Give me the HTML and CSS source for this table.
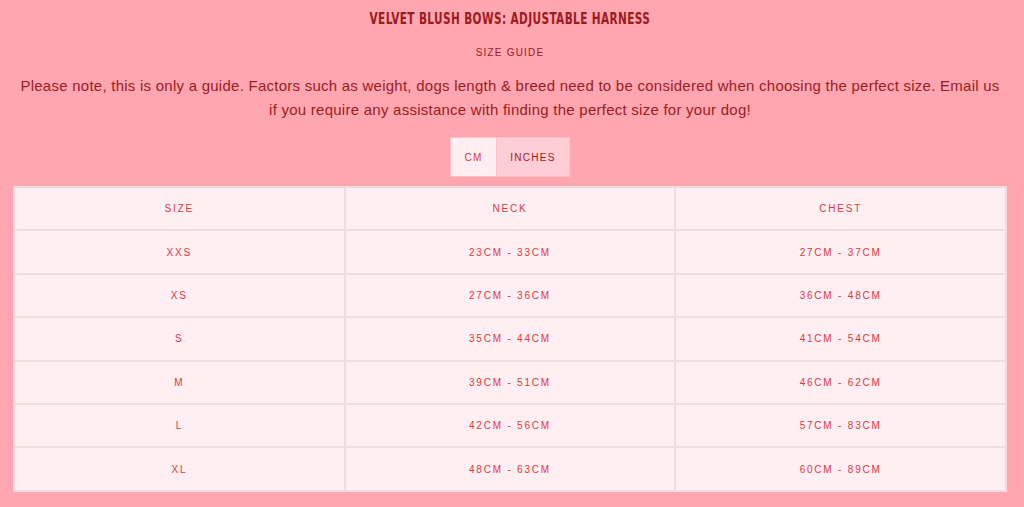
FILE: index.html
```html
<!DOCTYPE html>
<html>
<head>
<meta charset="utf-8">
<link rel="stylesheet" href="styles.css">
</head>
<body>
<div class="page">
  <h1 class="title">VELVET BLUSH BOWS: ADJUSTABLE HARNESS</h1>
  <h2 class="subtitle">SIZE GUIDE</h2>
  <p class="note">Please note, this is only a guide. Factors such as weight, dogs length &amp; breed need to be considered when choosing the perfect size. Email us if you require any assistance with finding the perfect size for your dog!</p>
  <div class="toggle">
    <button class="tab active">CM</button><button class="tab">INCHES</button>
  </div>
  <table class="sizes">
    <thead>
      <tr><th>SIZE</th><th>NECK</th><th>CHEST</th></tr>
    </thead>
    <tbody>
      <tr><td>XXS</td><td>23CM - 33CM</td><td>27CM - 37CM</td></tr>
      <tr><td>XS</td><td>27CM - 36CM</td><td>36CM - 48CM</td></tr>
      <tr><td>S</td><td>35CM - 44CM</td><td>41CM - 54CM</td></tr>
      <tr><td>M</td><td>39CM - 51CM</td><td>46CM - 62CM</td></tr>
      <tr><td>L</td><td>42CM - 56CM</td><td>57CM - 83CM</td></tr>
      <tr><td>XL</td><td>48CM - 63CM</td><td>60CM - 89CM</td></tr>
    </tbody>
  </table>
</div>
</body>
</html>
```

FILE: styles.css
```css
html, body {
  margin: 0;
  padding: 0;
  background: #ffa6b0;
}
.page {
  width: 994px;
  padding: 0 17px 0 13px;
  display: flex;
  flex-direction: column;
  align-items: center;
  font-family: "Liberation Sans", Arial, sans-serif;
}
.title {
  margin: 10px 0 0;
  font-family: "DejaVu Sans Condensed", "DejaVu Sans", sans-serif;
  font-weight: bold;
  font-size: 15px;
  line-height: 18px;
  letter-spacing: 0.5px;
  color: #9b1c1f;
  white-space: nowrap;
  transform: scaleX(0.78);
}
.subtitle {
  margin: 18px 0 0;
  font-size: 10px;
  font-weight: normal;
  letter-spacing: 1.2px;
  line-height: 14px;
  color: #9b1c1f;
}
.note {
  margin: 14px 0 0;
  width: 988px;
  text-align: center;
  font-size: 15px;
  line-height: 24px;
  letter-spacing: 0.25px;
  color: #9b1c1f;
}
.toggle {
  margin-top: 15px;
  display: flex;
}
.tab {
  height: 40px;
  padding: 0;
  border: 1px solid #ffc0c9;
  background: #ffcdd6;
  font-family: "Liberation Sans", Arial, sans-serif;
  font-size: 10px;
  letter-spacing: 1.3px;
  color: #9b1c1f;
}
.tab.active {
  background: #ffeef1;
  color: #d9363c;
  width: 47px;
}
.tab + .tab {
  border-left: none;
  width: 73px;
}
.sizes {
  margin-top: 9px;
  width: 994px;
  border-collapse: collapse;
  table-layout: fixed;
  background: #ffeff2;
  border: 2px solid #f4dfe3;
}
.sizes th, .sizes td {
  height: 41.4px;
  padding: 0;
  border: 2px solid #f0dbe0;
  text-align: center;
  font-weight: normal;
  font-size: 10px;
  letter-spacing: 1.8px;
  color: #e0383f;
}
```
